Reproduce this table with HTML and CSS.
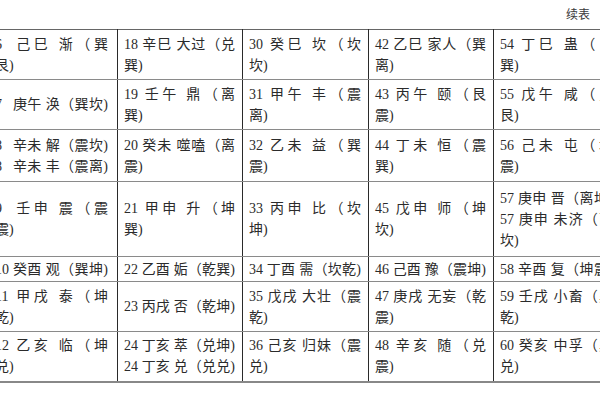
FILE: index.html
```html
<!DOCTYPE html>
<html lang="zh-CN">
<head>
<meta charset="utf-8">
<title>续表</title>
<link rel="stylesheet" href="styles.css">
</head>
<body>
<div class="page">
  <div class="head">续表</div>
  <table class="tbl">
    <colgroup>
      <col class="c1"><col class="c2"><col class="c3"><col class="c4"><col class="c5">
    </colgroup>
    <tr class="r50">
      <td><div class="j"><span class="num">6</span> 己巳 渐（巽</div><div>艮)</div></td>
      <td><div class="j">18 辛巳 大过（兑</div><div>巽)</div></td>
      <td><div class="j">30 癸巳 坎（坎</div><div>坎)</div></td>
      <td><div class="j">42 乙巳 家人（巽</div><div>离)</div></td>
      <td><div class="j">54 丁巳 蛊（艮</div><div>巽)</div></td>
    </tr>
    <tr class="r50">
      <td><div class="j"><span class="num">7</span> 庚午 涣（巽坎)</div></td>
      <td><div class="j">19 壬午 鼎（离</div><div>巽)</div></td>
      <td><div class="j">31 甲午 丰（震</div><div>离)</div></td>
      <td><div class="j">43 丙午 颐（艮</div><div>震)</div></td>
      <td><div class="j">55 戊午 咸（兑</div><div>艮)</div></td>
    </tr>
    <tr class="r52">
      <td><div class="j"><span class="num">8</span> 辛未 解（震坎)</div><div class="j"><span class="num">8</span> 辛未 丰（震离)</div></td>
      <td><div class="j">20 癸未 噬嗑（离</div><div>震)</div></td>
      <td><div class="j">32 乙未 益（巽</div><div>震)</div></td>
      <td><div class="j">44 丁未 恒（震</div><div>巽)</div></td>
      <td><div class="j">56 己未 屯（坎</div><div>震)</div></td>
    </tr>
    <tr class="r75">
      <td><div class="j"><span class="num">9</span> 壬申 震（震</div><div>震)</div></td>
      <td><div class="j">21 甲申 升（坤</div><div>巽)</div></td>
      <td><div class="j">33 丙申 比（坎</div><div>坤)</div></td>
      <td><div class="j">45 戊申 师（坤</div><div>坎)</div></td>
      <td><div class="j">57 庚申 晋（离坤)</div><div class="j">57 庚申 未济（离</div><div>坎)</div></td>
    </tr>
    <tr class="r25">
      <td><div class="j"><span class="num">10</span> 癸酉 观（巽坤)</div></td>
      <td><div class="j">22 乙酉 姤（乾巽)</div></td>
      <td><div class="j">34 丁酉 需（坎乾)</div></td>
      <td><div class="j">46 己酉 豫（震坤)</div></td>
      <td><div class="j">58 辛酉 复（坤震)</div></td>
    </tr>
    <tr class="r50">
      <td><div class="j"><span class="num">11</span> 甲戌 泰（坤</div><div>乾)</div></td>
      <td><div class="j">23 丙戌 否（乾坤)</div></td>
      <td><div class="j">35 戊戌 大壮（震</div><div>乾)</div></td>
      <td><div class="j">47 庚戌 无妄（乾</div><div>震)</div></td>
      <td><div class="j">59 壬戌 小畜（巽</div><div>乾)</div></td>
    </tr>
    <tr class="r50 last">
      <td><div class="j"><span class="num">12</span> 乙亥 临（坤</div><div>兑)</div></td>
      <td><div class="j">24 丁亥 萃（兑坤)</div><div class="j">24 丁亥 兑（兑兑)</div></td>
      <td><div class="j">36 己亥 归妹（震</div><div>兑)</div></td>
      <td><div class="j">48 辛亥 随（兑</div><div>震)</div></td>
      <td><div class="j">60 癸亥 中孚（巽</div><div>兑)</div></td>
    </tr>
  </table>
</div>
</body>
</html>
```

FILE: styles.css
```css
html, body {
  margin: 0;
  padding: 0;
  background: #ffffff;
}
body {
  width: 600px;
  height: 400px;
  overflow: hidden;
  font-family: "Liberation Serif", "Noto Sans CJK SC", serif;
  color: #2b2b2b;
}
.page {
  width: 600px;
  overflow: hidden;
}
.head {
  height: 29px;
  line-height: 30px;
  font-size: 12px;
  text-align: right;
  padding-right: 10px;
  color: #3a3a3a;
}
.tbl {
  border-collapse: collapse;
  table-layout: fixed;
  width: 633px;
  margin-left: -13px;
  font-size: 14px;
  line-height: 21px;
  border-top: 1px solid #666;
  border-bottom: 2px solid #888;
}
.c1 { width: 130px; }
.c2 { width: 125px; }
.c3 { width: 126px; }
.c4 { width: 125px; }
.c5 { width: 127px; }
.tbl td {
  vertical-align: middle;
  padding: 0 7px 0 6px;
  border-left: 1px solid #2a2a2a;
  border-right: 1px solid #2a2a2a;
  border-top: 1px solid #8a8a8a;
  border-bottom: 1px solid #8a8a8a;
}
.tbl td:first-child {
  padding-left: 7px;
  padding-right: 9px;
}
.tbl tr:first-child td { border-top: 1px solid #666; }
.tbl tr.last td { border-bottom: 2px solid #888; }
.r50 { height: 50px; }
.r52 { height: 52px; }
.r75 { height: 75px; }
.r25 { height: 25px; }
.j {
  text-align: justify;
  text-align-last: justify;
  white-space: nowrap;
}
.num {
  display: inline-block;
  width: 14px;
  text-align: right;
}
```
